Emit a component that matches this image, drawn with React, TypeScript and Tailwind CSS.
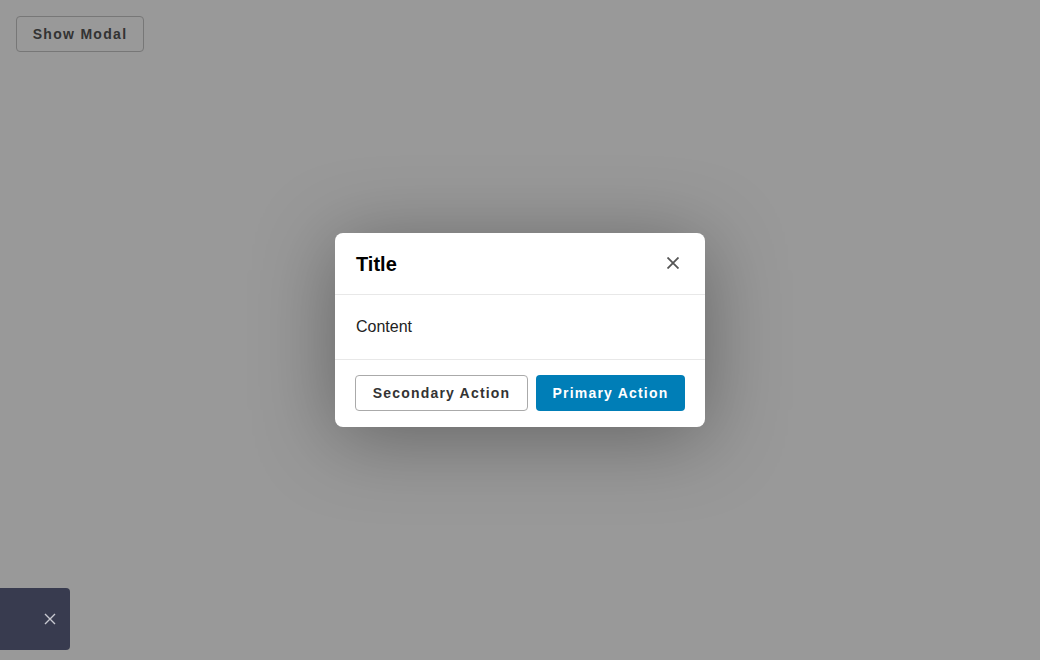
import React from "react";

export default function App() {
  return (
    <div className="relative w-[1040px] h-[660px] overflow-hidden bg-white" style={{ fontFamily: '"Liberation Sans", Arial, sans-serif' }}>
      <div className="p-4">
        <button className="h-9 w-[128px] rounded border border-[#c6c6c6] bg-white text-[#555] text-sm font-bold tracking-[1.3px]">
          Show Modal
        </button>
      </div>
      <div className="absolute inset-0 bg-black/40 flex items-center justify-center">
        <div className="w-[370px] bg-white rounded-lg shadow-[0_10px_80px_rgba(0,0,0,0.35)]">
          <div className="h-[62px] flex items-center justify-between pl-[21px] pr-[26px] border-b border-[#e8e8e8]">
            <span className="text-xl font-bold text-black">Title</span>
            <svg width="12" height="12" viewBox="0 0 12 12" className="text-[#555] -mt-[2px]">
              <path d="M0.5 0.5L11.5 11.5M11.5 0.5L0.5 11.5" stroke="currentColor" strokeWidth="1.8" />
            </svg>
          </div>
          <div className="h-[65px] flex items-center px-[21px] border-b border-[#e8e8e8] text-base text-[#222]">
            Content
          </div>
          <div className="h-[67px] flex items-start justify-end gap-2 px-5 pt-[15px]">
            <button className="h-9 w-[173px] rounded border border-[#aaa] bg-white text-[#333] text-sm font-bold tracking-[1.2px]">
              Secondary Action
            </button>
            <button className="h-9 w-[149px] rounded bg-[#007eb7] text-white text-sm font-bold tracking-[1.2px]">
              Primary Action
            </button>
          </div>
        </div>
      </div>
      <div className="absolute left-0 top-[588px] w-[70px] h-[62px] bg-[#383b4f] rounded-r flex items-center justify-end pr-[14px]">
        <svg width="12" height="12" viewBox="0 0 12 12" className="text-[#c8c9d0]">
          <path d="M1 1L11 11M11 1L1 11" stroke="currentColor" strokeWidth="1.4" />
        </svg>
      </div>
    </div>
  );
}
